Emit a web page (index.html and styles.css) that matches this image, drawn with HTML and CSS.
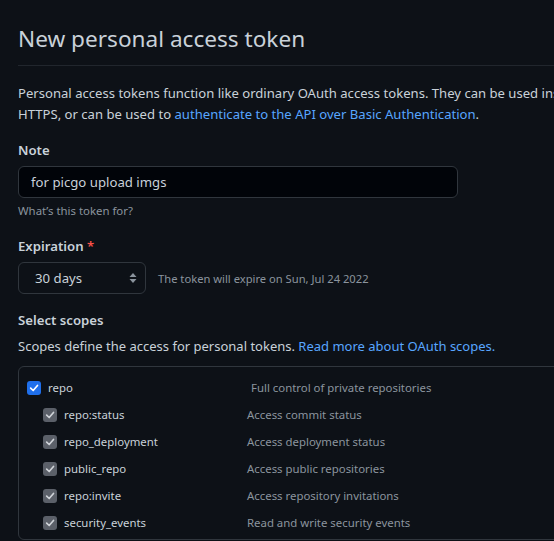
FILE: index.html
```html
<!DOCTYPE html>
<html>
<head>
<meta charset="utf-8">
<link rel="stylesheet" href="styles.css">
</head>
<body>
<div class="page">
  <div class="subhead"><h2 class="title">New personal access token</h2></div>
  <p class="intro">Personal access tokens function like ordinary OAuth access tokens. They can be used instead of a password for Git over<br>HTTPS, or can be used to <a href="#">authenticate to the API over Basic Authentication</a>.</p>

  <div class="group">
    <label class="lbl">Note</label>
    <div class="input">for picgo upload imgs</div>
    <p class="note">What’s this token for?</p>
  </div>

  <div class="group">
    <label class="lbl">Expiration <span class="req">*</span></label>
    <div class="exp-row">
      <div class="select">30 days
        <svg class="arrows" width="8" height="12" viewBox="0 0 8 12"><path d="M4 1 L7.5 5 H0.5 Z M4 11 L0.5 7 H7.5 Z" fill="#8b949e"/></svg>
      </div>
      <span class="exp-note">The token will expire on Sun, Jul 24 2022</span>
    </div>
  </div>

  <div class="group">
    <label class="lbl">Select scopes</label>
    <p class="scopes-desc">Scopes define the access for personal tokens. <a href="#">Read more about OAuth scopes.</a></p>
    <div class="table">
      <div class="row parent">
        <span class="cb blue"><svg width="10" height="10" viewBox="0 0 12 12"><path d="M2 6.2 L5 9 L10.2 3" stroke="#fff" stroke-width="2" fill="none" stroke-linecap="round" stroke-linejoin="round"/></svg></span>
        <span class="name">repo</span>
        <span class="desc first">Full control of private repositories</span>
      </div>
      <div class="row child">
        <span class="cb grey"><svg width="10" height="10" viewBox="0 0 12 12"><path d="M2 6.2 L5 9 L10.2 3" stroke="#d0d4d9" stroke-width="2" fill="none" stroke-linecap="round" stroke-linejoin="round"/></svg></span>
        <span class="name">repo:status</span>
        <span class="desc">Access commit status</span>
      </div>
      <div class="row child">
        <span class="cb grey"><svg width="10" height="10" viewBox="0 0 12 12"><path d="M2 6.2 L5 9 L10.2 3" stroke="#d0d4d9" stroke-width="2" fill="none" stroke-linecap="round" stroke-linejoin="round"/></svg></span>
        <span class="name">repo_deployment</span>
        <span class="desc">Access deployment status</span>
      </div>
      <div class="row child">
        <span class="cb grey"><svg width="10" height="10" viewBox="0 0 12 12"><path d="M2 6.2 L5 9 L10.2 3" stroke="#d0d4d9" stroke-width="2" fill="none" stroke-linecap="round" stroke-linejoin="round"/></svg></span>
        <span class="name">public_repo</span>
        <span class="desc">Access public repositories</span>
      </div>
      <div class="row child">
        <span class="cb grey"><svg width="10" height="10" viewBox="0 0 12 12"><path d="M2 6.2 L5 9 L10.2 3" stroke="#d0d4d9" stroke-width="2" fill="none" stroke-linecap="round" stroke-linejoin="round"/></svg></span>
        <span class="name">repo:invite</span>
        <span class="desc">Access repository invitations</span>
      </div>
      <div class="row child">
        <span class="cb grey"><svg width="10" height="10" viewBox="0 0 12 12"><path d="M2 6.2 L5 9 L10.2 3" stroke="#d0d4d9" stroke-width="2" fill="none" stroke-linecap="round" stroke-linejoin="round"/></svg></span>
        <span class="name">security_events</span>
        <span class="desc">Read and write security events</span>
      </div>
    </div>
  </div>
</div>
</body>
</html>
```
FILE: styles.css
```css
html, body {
  margin: 0;
  padding: 0;
  background: #0d1117;
  overflow: hidden;
  height: 541px;
}
body {
  font-family: "Noto Sans", "Open Sans", sans-serif;
  font-size: 13.2px;
  line-height: 21px;
  color: #c9d1d9;
}
.page {
  padding: 24px 0 0 18px;
  width: 780px;
}
.subhead {
  border-bottom: 1px solid #21262d;
  padding-bottom: 11px;
  margin-bottom: 17px;
  width: 760px;
}
.title {
  margin: 0;
  font-size: 22.6px;
  font-weight: 400;
  line-height: 30px;
  color: #c9d1d9;
}
a {
  color: #58a6ff;
  text-decoration: none;
}
.intro {
  margin: 0 0 15px;
  width: 760px;
  font-size: 13.1px;
}
.group {
  margin-bottom: 16px;
}
.lbl {
  display: block;
  font-weight: 600;
  margin-bottom: 5px;
}
.req {
  color: #f85149;
}
.input {
  width: 440px;
  height: 32px;
  box-sizing: border-box;
  border: 1px solid #30363d;
  border-radius: 6px;
  background: #010409;
  padding: 0 12px;
  line-height: 30px;
}
.note {
  margin: 4px 0 0;
  font-size: 11.4px;
  line-height: 18px;
  color: #8b949e;
}
.exp-row {
  display: flex;
  align-items: center;
  gap: 12px;
}
.select {
  width: 128px;
  height: 32px;
  box-sizing: border-box;
  border: 1px solid #30363d;
  border-radius: 6px;
  background: #0d1117;
  padding: 0 8px 0 16px;
  line-height: 31px;
  display: flex;
  justify-content: space-between;
  align-items: center;
}
.exp-note {
  font-size: 11.2px;
  color: #8b949e;
}
.scopes-desc {
  margin: 0 0 9px;
  font-size: 13px;
}
.table {
  width: 760px;
  border: 1px solid #30363d;
  border-radius: 6px;
  padding: 7px 0 3px;
}
.row {
  display: grid;
  align-items: center;
  height: 27px;
}
.row.parent {
  grid-template-columns: 14px 196px 1fr;
  padding-left: 8px;
  column-gap: 7px;
}
.row.child {
  grid-template-columns: 14px 176px 1fr;
  padding-left: 24px;
  column-gap: 7px;
}
.cb {
  width: 14px;
  height: 14px;
  border-radius: 3px;
  display: flex;
  align-items: center;
  justify-content: center;
}
.cb.blue {
  background: #1f6feb;
}
.cb.grey {
  background: #5b6069;
}
.name {
  color: #c9d1d9;
  font-size: 11.4px;
}
.desc {
  font-size: 11.4px;
  color: #8b949e;
}
```
